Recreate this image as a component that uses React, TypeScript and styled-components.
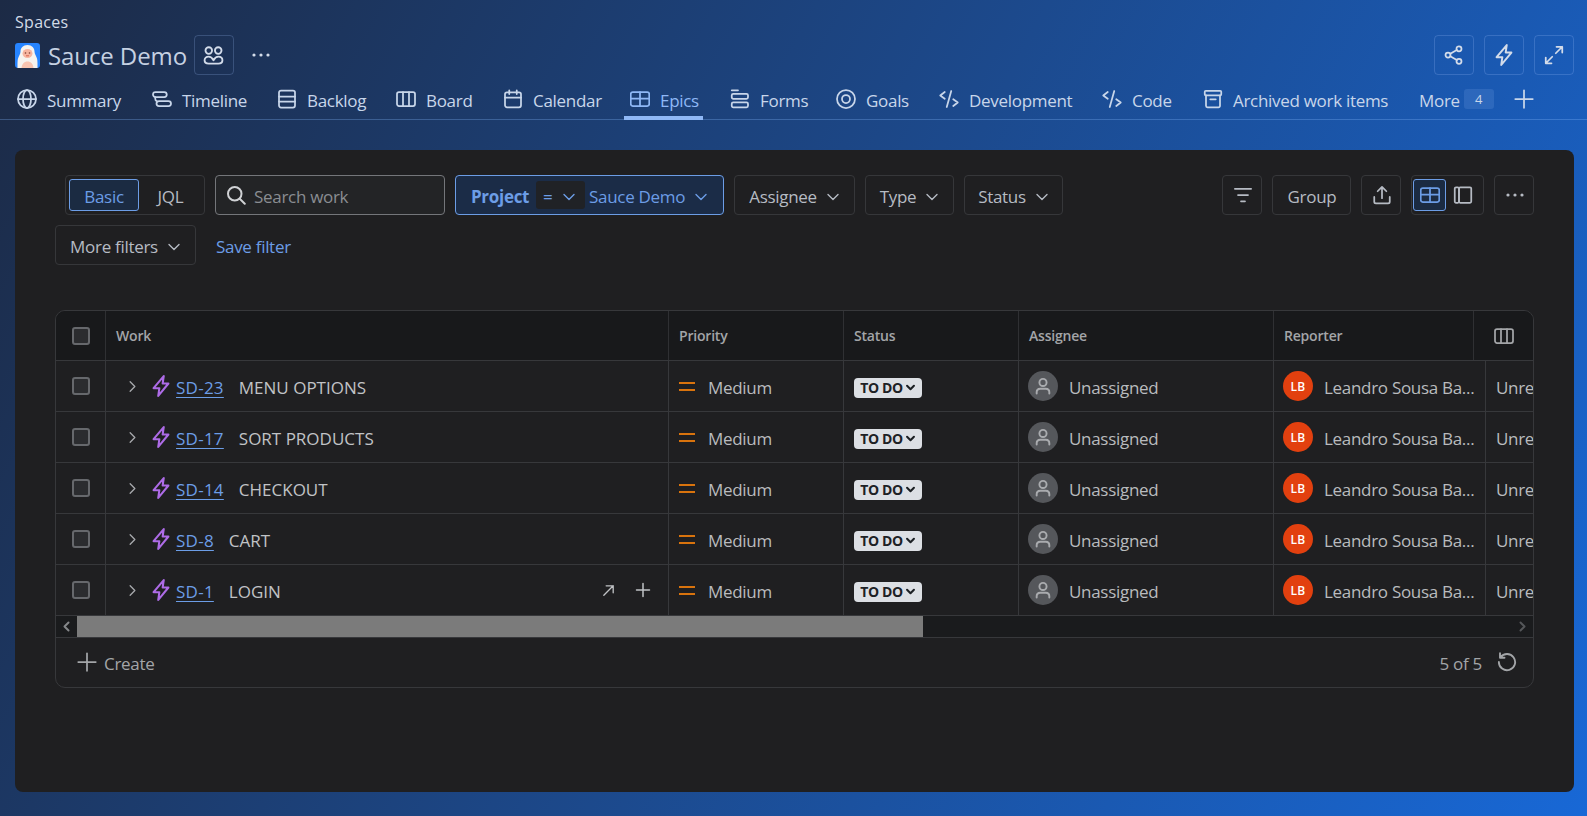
import React from 'react';
import styled, { createGlobalStyle } from 'styled-components';

const GlobalStyle = createGlobalStyle`
  html, body, #root {
    margin: 0;
    padding: 0;
    height: 100%;
  }
  body {
    font-family: 'Open Sans', 'Noto Sans', 'Liberation Sans', sans-serif;
    font-size: 17px;
    letter-spacing: -0.3px;
    overflow: hidden;
  }
  * { box-sizing: border-box; }
`;

const Page = styled.div`
  width: 1587px;
  height: 816px;
  overflow: hidden;
  display: flex;
  flex-direction: column;
  background: linear-gradient(118deg, #1c2a45 0%, #1c4a8e 52%, #1868d6 100%);
`;

const Header = styled.header`
  height: 120px;
  flex: none;
  display: flex;
  flex-direction: column;
  border-bottom: 1px solid rgba(133, 184, 255, 0.3);
`;

const Crumb = styled.div`
  height: 35px;
  padding: 13px 0 0 15px;
  font-size: 16px;
  line-height: 19px;
  letter-spacing: 0.3px;
  color: #d3dbe7;
`;

const TitleRow = styled.div`
  height: 40px;
  padding: 0 13px 0 15px;
  display: flex;
  align-items: center;
`;

const Logo = styled.svg`
  width: 25px;
  height: 25px;
  flex: none;
`;

const Title = styled.h1`
  margin: 2px 7px 0 8px;
  font-size: 24px;
  font-weight: 400;
  line-height: 32px;
  letter-spacing: -0.1px;
  color: #c5d1e2;
`;

const GhostBtn = styled.button<{ $mr?: number }>`
  width: 40px;
  height: 40px;
  flex: none;
  display: flex;
  align-items: center;
  justify-content: center;
  padding: 0;
  background: transparent;
  border: 1px solid rgba(166, 197, 255, 0.22);
  border-radius: 4px;
  color: #d3dcea;
  margin-right: ${p => p.$mr ?? 0}px;
`;

const PlainBtn = styled.button`
  width: 24px;
  height: 24px;
  margin-left: 15px;
  display: flex;
  align-items: center;
  justify-content: center;
  padding: 0;
  border: none;
  background: transparent;
  color: #d3dcea;
`;

const Spacer = styled.div`
  flex: 1;
`;

const Tabs = styled.nav`
  flex: 1;
  display: flex;
  align-items: stretch;
  padding-left: 11px;
`;

const Tab = styled.div<{ $active?: boolean; $w: number }>`
  position: relative;
  width: ${p => p.$w}px;
  flex: none;
  display: flex;
  align-items: center;
  gap: 10px;
  padding: 4px 0 0 6px;
  white-space: nowrap;
  color: ${p => (p.$active ? '#8fb8f6' : '#c8d6ea')};

  ${p =>
    p.$active &&
    `&::after {
      content: '';
      position: absolute;
      left: 0;
      bottom: -1px;
      width: 79px;
      height: 4px;
      background: #8fb8f6;
    }`}
`;

const MoreBadge = styled.span`
  width: 30px;
  height: 20px;
  margin-left: -6px;
  border-radius: 3px;
  background: rgba(166, 197, 255, 0.14);
  display: flex;
  align-items: center;
  justify-content: center;
  font-size: 13px;
  letter-spacing: 0;
`;

const Panel = styled.main`
  margin: 30px 13px 0 15px;
  height: 642px;
  padding: 25px 40px 0;
  background: #1f1f21;
  border-radius: 8px;
  display: flex;
  flex-direction: column;
`;

const FilterRow = styled.div`
  height: 40px;
  display: flex;
  align-items: center;
  padding-left: 10px;
`;

const FilterRowTwo = styled(FilterRow)`
  padding-left: 0;
  margin-top: 10px;
  margin-bottom: 45px;
  flex: none;
`;

const Txt = styled.span`
  padding-top: 3px;
`;

const ChevronBox = styled(Txt)`
  display: flex;
`;

const Toggle = styled.div<{ $w: number; $mr: number; $pl: number }>`
  width: ${p => p.$w}px;
  height: 40px;
  flex: none;
  display: flex;
  align-items: center;
  padding-left: ${p => p.$pl}px;
  margin-right: ${p => p.$mr}px;
  border: 1px solid #36373a;
  border-radius: 4px;
`;

const ToggleItem = styled.div<{ $on?: boolean; $w: number }>`
  width: ${p => p.$w}px;
  height: 32px;
  display: flex;
  align-items: center;
  justify-content: center;
  border-radius: 3px;
  border: 1px solid ${p => (p.$on ? '#6c9de6' : 'transparent')};
  background: ${p => (p.$on ? '#1b2b42' : 'transparent')};
  color: ${p => (p.$on ? '#6c9de6' : '#b6bbc3')};
`;

const Search = styled.div`
  width: 230px;
  height: 40px;
  flex: none;
  margin-right: 10px;
  padding-left: 10px;
  display: flex;
  align-items: center;
  gap: 8px;
  border: 1px solid #74767a;
  border-radius: 4px;
  background: #232426;
  color: #d0d2d5;
`;

const Placeholder = styled(Txt)`
  color: #8a8d92;
`;

const ProjectPill = styled.div`
  width: 269px;
  height: 40px;
  flex: none;
  margin-right: 10px;
  padding-left: 15px;
  display: flex;
  align-items: center;
  border: 1px solid #6c9de6;
  border-radius: 4px;
  background: #1b2c47;
  color: #6c9de6;
`;

const ProjectName = styled(Txt)`
  font-weight: 700;
  width: 65px;
`;

const Operator = styled.div`
  width: 49px;
  height: 28px;
  margin-right: 4px;
  padding-left: 7px;
  display: flex;
  align-items: center;
  gap: 9px;
  background: #202226;
  border-radius: 3px;
`;

const ProjectValue = styled.div`
  display: flex;
  align-items: center;
  gap: 8px;
`;

const FilterBtn = styled.button<{ $w?: number; $mr?: number }>`
  width: ${p => (p.$w ? `${p.$w}px` : 'auto')};
  height: 40px;
  flex: none;
  padding: 0 0 0 1px;
  margin-right: ${p => p.$mr ?? 10}px;
  display: flex;
  align-items: center;
  justify-content: center;
  gap: 8px;
  background: transparent;
  border: 1px solid #36373a;
  border-radius: 4px;
  color: #b6bbc3;
  font-family: inherit;
  font-size: 17px;
  letter-spacing: -0.3px;
`;

const SaveLink = styled(Txt)`
  margin-left: 20px;
  color: #6c9de6;
`;

const TableBox = styled.section`
  height: 378px;
  flex: none;
  border: 1px solid #37383b;
  border-radius: 10px;
  overflow: hidden;
  display: flex;
  flex-direction: column;
`;

const HeadRow = styled.div`
  height: 50px;
  flex: none;
  display: grid;
  grid-template-columns: 50px 563px 175px 175px 255px 200px 1fr;
  background: #18191b;
  border-bottom: 1px solid #37383b;
`;

const HeadCell = styled.div<{ $center?: boolean }>`
  display: flex;
  align-items: center;
  justify-content: ${p => (p.$center ? 'center' : 'flex-start')};
  padding: ${p => (p.$center ? '0' : '0 10px')};
  border-right: 1px solid #2f3033;
  font-size: 14px;
  font-weight: 600;
  letter-spacing: -0.2px;
  color: #a3a5a8;

  &:last-child {
    border-right: none;
  }
`;

const Row = styled.div`
  height: 51px;
  flex: none;
  display: grid;
  grid-template-columns: 50px 563px 175px 175px 255px 212px 1fr;
  border-bottom: 1px solid #37383b;

  &:last-of-type {
    height: 50px;
    border-bottom: none;
  }
`;

const Cell = styled.div<{ $center?: boolean }>`
  min-width: 0;
  overflow: hidden;
  display: flex;
  align-items: center;
  justify-content: ${p => (p.$center ? 'center' : 'flex-start')};
  padding: ${p => (p.$center ? '0' : '0 10px')};
  border-right: 1px solid #37383b;
  color: #b9bbbe;
  white-space: nowrap;

  &:last-child {
    border-right: none;
    padding-right: 0;
  }
`;

const WorkCell = styled(Cell)`
  padding: 0 0 0 19px;
`;

const Checkbox = styled.span`
  width: 18px;
  height: 18px;
  border: 2px solid #66686c;
  border-radius: 3px;
  background: #2b2c2f;
`;

const Expander = styled.span`
  width: 25px;
  display: flex;
  color: #a7a9ad;
`;

const EpicIcon = styled.span`
  width: 23px;
  margin-right: 3px;
  display: flex;
  color: #ad6be6;
`;

const KeyLink = styled.a`
  padding-top: 3px;
  color: #6c9de6;
  letter-spacing: 0.25px;
  text-decoration: underline;
  text-underline-offset: 3px;
  margin-right: 15px;
`;

const EpicName = styled(Txt)`
  letter-spacing: 0;
  color: #c1c3c6;
`;

const RowActions = styled.div`
  margin-left: auto;
  padding-right: 17px;
  display: flex;
  align-items: center;
  gap: 19px;
  color: #c1c3c6;
`;

const PriorityBars = styled.span`
  width: 16px;
  height: 9px;
  margin-right: 13px;
  border-top: 2px solid #d9730d;
  border-bottom: 2px solid #d9730d;
`;

const StatusPill = styled.span`
  width: 68px;
  height: 20px;
  margin-top: 3px;
  display: flex;
  align-items: center;
  justify-content: center;
  gap: 2px;
  border-radius: 4px;
  background: #dcdfe4;
  color: #1d2125;
  font-size: 14px;
  font-weight: 700;
  letter-spacing: -0.4px;
`;

const Avatar = styled.span<{ $bg: string; $fg: string }>`
  width: 30px;
  height: 30px;
  flex: none;
  margin: 0 11px 0 -1px;
  border-radius: 50%;
  display: flex;
  align-items: center;
  justify-content: center;
  background: ${p => p.$bg};
  color: ${p => p.$fg};
  font-size: 12px;
  font-weight: 600;
  letter-spacing: 0.3px;
`;

const ClippedName = styled(Txt)`
  overflow: hidden;
`;

const ScrollBar = styled.div`
  height: 22px;
  flex: none;
  display: flex;
  align-items: center;
  background: #1a1b1d;
  border-bottom: 1px solid #37383b;
`;

const ScrollArrow = styled.span<{ $dim?: boolean }>`
  width: 21px;
  flex: none;
  display: flex;
  justify-content: center;
  color: ${p => (p.$dim ? '#55575a' : '#85878a')};
`;

const ScrollThumb = styled.div`
  width: 846px;
  height: 21px;
  flex: none;
  background: #7b7b7b;
`;

const Footer = styled.div`
  flex: 1;
  display: flex;
  align-items: center;
  padding: 0 16px 2px 21px;
  color: #a3a5a8;
`;

const FooterCreate = styled.div`
  display: flex;
  align-items: center;
  gap: 7px;
`;

const Count = styled(Txt)`
  margin: 0 15px 0 auto;
`;

type IconProps = { size?: number; weight?: number; children: React.ReactNode };

const Ico = ({ size = 20, weight = 1.4, children }: IconProps) => (
  <svg
    width={size}
    height={size}
    viewBox="0 0 16 16"
    fill="none"
    stroke="currentColor"
    strokeWidth={weight}
    strokeLinecap="round"
    strokeLinejoin="round"
  >
    {children}
  </svg>
);

const Bolt = ({ size = 20, weight }: { size?: number; weight?: number }) => (
  <Ico size={size} weight={weight}>
    <path d="M10 .8 9.2 6.200h4.200L6 15.200l.8-5.600H2.600Z" />
  </Ico>
);

const Chevron = ({ size = 16 }: { size?: number }) => (
  <ChevronBox>
    <Ico size={size}>
      <path d="m3 5.500 5 5 5-5" />
    </Ico>
  </ChevronBox>
);

const Plus = ({ size = 20 }: { size?: number }) => (
  <Ico size={size}>
    <path d="M8 1v14M1 8h14" />
  </Ico>
);

const TableGlyph = () => (
  <Ico>
    <rect x="0.600" y="2.400" width="14.800" height="11.200" rx="1.600" />
    <path d="M.6 7.600h14.800M8 2.400v11.200" />
  </Ico>
);

const ColumnsGlyph = () => (
  <Ico>
    <rect x="0.800" y="2.400" width="14.400" height="11.200" rx="1.600" />
    <path d="M5.600 2.400v11.200M10.400 2.400v11.200" />
  </Ico>
);

const CodeGlyph = () => (
  <Ico>
    <path d="M4.600 2.400 1 5.200l3.600 2.600M11.400 8.200 15 10.800l-3.600 2.800M9.800 1.600 6.200 14.400" />
  </Ico>
);

const DotsGlyph = () => (
  <svg width="20" height="20" viewBox="0 0 20 20" fill="currentColor">
    <circle cx="3" cy="10" r="1.600" />
    <circle cx="10" cy="10" r="1.600" />
    <circle cx="17" cy="10" r="1.600" />
  </svg>
);

const tabs = [
  {
    label: 'Summary',
    w: 135,
    icon: (
      <Ico>
        <circle cx="8" cy="8" r="7.200" />
        <path d="M.8 8h14.400" />
        <ellipse cx="8" cy="8" rx="3.200" ry="7.200" />
      </Ico>
    ),
  },
  {
    label: 'Timeline',
    w: 125,
    icon: (
      <Ico>
        <rect x="0.800" y="2.400" width="11" height="4" rx="2" />
        <rect x="3.600" y="9.600" width="11.600" height="4" rx="2" />
        <path d="M2.600 6.400v1.400a2 2 0 0 0 1.400 2" />
      </Ico>
    ),
  },
  {
    label: 'Backlog',
    w: 119,
    icon: (
      <Ico>
        <rect x="1.600" y="1.200" width="12.800" height="13.600" rx="1.600" />
        <path d="M1.600 6h12.800M1.600 10h12.800" />
      </Ico>
    ),
  },
  { label: 'Board', w: 107, icon: <ColumnsGlyph /> },
  {
    label: 'Calendar',
    w: 127,
    icon: (
      <Ico>
        <rect x="1.600" y="2.600" width="12.800" height="12" rx="1.600" />
        <path d="M1.600 6.800h12.800M5 1v3M11 1v3" />
      </Ico>
    ),
  },
  { label: 'Epics', w: 100, active: true, icon: <TableGlyph /> },
  {
    label: 'Forms',
    w: 106,
    icon: (
      <Ico>
        <path d="M1.400 1h5" />
        <rect x="1.400" y="3.800" width="13" height="4" rx="1.200" />
        <rect x="1.400" y="10.600" width="13" height="4" rx="1.200" />
      </Ico>
    ),
  },
  {
    label: 'Goals',
    w: 103,
    icon: (
      <Ico>
        <circle cx="8" cy="8" r="7.200" />
        <circle cx="8" cy="8" r="3.200" />
      </Ico>
    ),
  },
  { label: 'Development', w: 163, icon: <CodeGlyph /> },
  { label: 'Code', w: 101, icon: <CodeGlyph /> },
  {
    label: 'Archived work items',
    w: 216,
    icon: (
      <Ico>
        <rect x="1.400" y="1.400" width="13.200" height="3.600" rx="0.800" />
        <path d="M2.400 5v8.400a1.200 1.200 0 0 0 1.200 1.200h8.800a1.200 1.200 0 0 0 1.200-1.200V5M5.800 8.200h4.400" />
      </Ico>
    ),
  },
];

const epics = [
  { key: 'SD-23', name: 'MENU OPTIONS' },
  { key: 'SD-17', name: 'SORT PRODUCTS' },
  { key: 'SD-14', name: 'CHECKOUT' },
  { key: 'SD-8', name: 'CART' },
  { key: 'SD-1', name: 'LOGIN', hovered: true },
];

export default function App() {
  return (
    <Page>
      <GlobalStyle />
      <Header>
        <Crumb>Spaces</Crumb>
        <TitleRow>
          <Logo viewBox="0 0 25 25">
            <rect width="25" height="25" rx="3" fill="#2684ff" />
            <path d="M12.500 2c-4.500 0-7 3-7 6.500 0 2.500-1.500 4-2.500 7-.6 2-.5 6-.5 9.500h20c0-3.500.1-7.500-.5-9.500-1-3-2.500-4.500-2.500-7 0-3.500-2.500-6.500-7-6.500Z" fill="#f7f3ee" />
            <ellipse cx="12.500" cy="10.500" rx="5" ry="4.600" fill="#f7b5a0" />
            <path d="M6.500 25c.4-4 2.600-6.500 6-6.500s5.600 2.500 6 6.500Z" fill="#f9c4b0" />
            <circle cx="10.500" cy="10" r="0.800" fill="#7a3b2e" />
            <circle cx="14.500" cy="10" r="0.800" fill="#7a3b2e" />
            <path d="M11 12.800h3" stroke="#d9664f" strokeWidth="1" />
          </Logo>
          <Title>Sauce Demo</Title>
          <GhostBtn aria-label="Team">
            <Ico size={21}>
              <circle cx="4.400" cy="4.200" r="2.500" />
              <circle cx="11.600" cy="4.200" r="2.500" />
              <path d="M8 11.600C7 9.800 5.900 8.800 4.300 8.800c-1.800 0-3.100 1.200-3.100 2.800 0 1.600 1.300 2.600 3.100 2.600h7.400c1.800 0 3.100-1 3.100-2.600 0-1.600-1.300-2.800-3.100-2.800-1.600 0-2.700 1-3.700 2.800Z" />
            </Ico>
          </GhostBtn>
          <PlainBtn aria-label="More">
            <DotsGlyph />
          </PlainBtn>
          <Spacer />
          <GhostBtn $mr={10} aria-label="Share">
            <Ico>
              <circle cx="3.200" cy="8" r="2" />
              <circle cx="12" cy="3" r="2" />
              <circle cx="12" cy="13" r="2" />
              <path d="m5 7 5.200-3M5 9l5.200 3" />
            </Ico>
          </GhostBtn>
          <GhostBtn $mr={10} aria-label="Automation">
            <Bolt size={22} />
          </GhostBtn>
          <GhostBtn aria-label="Full screen">
            <Ico>
              <path d="M9.400 6.600 14.600 1.400M10 1.400h4.600V6M6.600 9.400 1.400 14.600M6 14.600H1.400V10" />
            </Ico>
          </GhostBtn>
        </TitleRow>
        <Tabs>
          {tabs.map(tab => (
            <Tab key={tab.label} $w={tab.w} $active={tab.active}>
              {tab.icon}
              <Txt>{tab.label}</Txt>
            </Tab>
          ))}
          <Tab $w={95}>
            <Txt>More</Txt>
            <MoreBadge>4</MoreBadge>
          </Tab>
          <Tab $w={30}>
            <Plus />
          </Tab>
        </Tabs>
      </Header>

      <Panel>
        <FilterRow>
          <Toggle $w={140} $mr={10} $pl={3}>
            <ToggleItem $on $w={70}>
              <Txt>Basic</Txt>
            </ToggleItem>
            <ToggleItem $w={63}>
              <Txt>JQL</Txt>
            </ToggleItem>
          </Toggle>
          <Search>
            <Ico size={20} weight={1.6}>
              <circle cx="7" cy="7" r="5.400" />
              <path d="m11 11 4 4" />
            </Ico>
            <Placeholder>Search work</Placeholder>
          </Search>
          <ProjectPill>
            <ProjectName>Project</ProjectName>
            <Operator>
              <Txt>=</Txt>
              <Chevron />
            </Operator>
            <ProjectValue>
              <Txt>Sauce Demo</Txt>
              <Chevron />
            </ProjectValue>
          </ProjectPill>
          <FilterBtn $w={121}>
            <Txt>Assignee</Txt>
            <Chevron />
          </FilterBtn>
          <FilterBtn $w={89}>
            <Txt>Type</Txt>
            <Chevron />
          </FilterBtn>
          <FilterBtn $w={99} $mr={0}>
            <Txt>Status</Txt>
            <Chevron />
          </FilterBtn>
          <Spacer />
          <FilterBtn $w={40} aria-label="Sort">
            <Ico>
              <path d="M1.500 3h13M4 8h8M6.400 13h3.200" />
            </Ico>
          </FilterBtn>
          <FilterBtn $w={79}>
            <Txt>Group</Txt>
          </FilterBtn>
          <FilterBtn $w={40} aria-label="Export">
            <Ico>
              <path d="M8 10.500V1.500M4.500 5 8 1.500 11.500 5M1.800 9.500v3.800c0 .8.500 1.300 1.300 1.300h9.800c.8 0 1.300-.5 1.300-1.300V9.500" />
            </Ico>
          </FilterBtn>
          <Toggle $w={73} $mr={10} $pl={1}>
            <ToggleItem $on $w={33}>
              <TableGlyph />
            </ToggleItem>
            <ToggleItem $w={34}>
              <Ico>
                <rect x="1.400" y="1.800" width="3.400" height="12.400" rx="1" />
                <rect x="4.800" y="1.800" width="9.800" height="12.400" rx="1" />
              </Ico>
            </ToggleItem>
          </Toggle>
          <FilterBtn $w={40} $mr={0} aria-label="More actions">
            <DotsGlyph />
          </FilterBtn>
        </FilterRow>
        <FilterRowTwo>
          <FilterBtn $w={141} $mr={0}>
            <Txt>More filters</Txt>
            <Chevron />
          </FilterBtn>
          <SaveLink>Save filter</SaveLink>
        </FilterRowTwo>

        <TableBox>
          <HeadRow>
            <HeadCell $center>
              <Checkbox />
            </HeadCell>
            <HeadCell>Work</HeadCell>
            <HeadCell>Priority</HeadCell>
            <HeadCell>Status</HeadCell>
            <HeadCell>Assignee</HeadCell>
            <HeadCell>Reporter</HeadCell>
            <HeadCell $center>
              <ColumnsGlyph />
            </HeadCell>
          </HeadRow>
          {epics.map(epic => (
            <Row key={epic.key}>
              <Cell $center>
                <Checkbox />
              </Cell>
              <WorkCell>
                <Expander>
                  <Ico size={15}>
                    <path d="m5.500 3 5 5-5 5" />
                  </Ico>
                </Expander>
                <EpicIcon>
                  <Bolt size={22} weight={1.5} />
                </EpicIcon>
                <KeyLink>{epic.key}</KeyLink>
                <EpicName>{epic.name}</EpicName>
                {epic.hovered && (
                  <RowActions>
                    <Ico size={15}>
                      <path d="M3 13 13 3M5.500 3H13v7.500" />
                    </Ico>
                    <Ico size={16} weight={1.5}>
                      <path d="M8 1.500v13M1.500 8h13" />
                    </Ico>
                  </RowActions>
                )}
              </WorkCell>
              <Cell>
                <PriorityBars />
                <Txt>Medium</Txt>
              </Cell>
              <Cell>
                <StatusPill>
                  TO DO
                  <Ico size={11} weight={3}>
                    <path d="m3 5.500 5 5 5-5" />
                  </Ico>
                </StatusPill>
              </Cell>
              <Cell>
                <Avatar $bg="#55575b" $fg="#a9abae">
                  <Ico size={22}>
                    <circle cx="8" cy="5.400" r="2.600" />
                    <path d="M3.400 13.400v-.8c0-1.600 1-2.600 2.600-2.600h4c1.600 0 2.600 1 2.600 2.600v.8" />
                  </Ico>
                </Avatar>
                <Txt>Unassigned</Txt>
              </Cell>
              <Cell>
                <Avatar $bg="#e2400f" $fg="#ffffff">LB</Avatar>
                <ClippedName>Leandro Sousa Ba...</ClippedName>
              </Cell>
              <Cell>
                <Txt>Unre</Txt>
              </Cell>
            </Row>
          ))}
          <ScrollBar>
            <ScrollArrow>
              <Ico size={13} weight={2.4}>
                <path d="M10.500 3 5.500 8l5 5" />
              </Ico>
            </ScrollArrow>
            <ScrollThumb />
            <Spacer />
            <ScrollArrow $dim>
              <Ico size={13} weight={2.4}>
                <path d="m5.500 3 5 5-5 5" />
              </Ico>
            </ScrollArrow>
          </ScrollBar>
          <Footer>
            <FooterCreate>
              <Plus />
              <Txt>Create</Txt>
            </FooterCreate>
            <Count>5 of 5</Count>
            <Ico size={20} weight={1.5}>
              <path d="M2.800 4.200A6.500 6.500 0 1 1 1.500 8M2.400 1v3.600H6" />
            </Ico>
          </Footer>
        </TableBox>
      </Panel>
    </Page>
  );
}
